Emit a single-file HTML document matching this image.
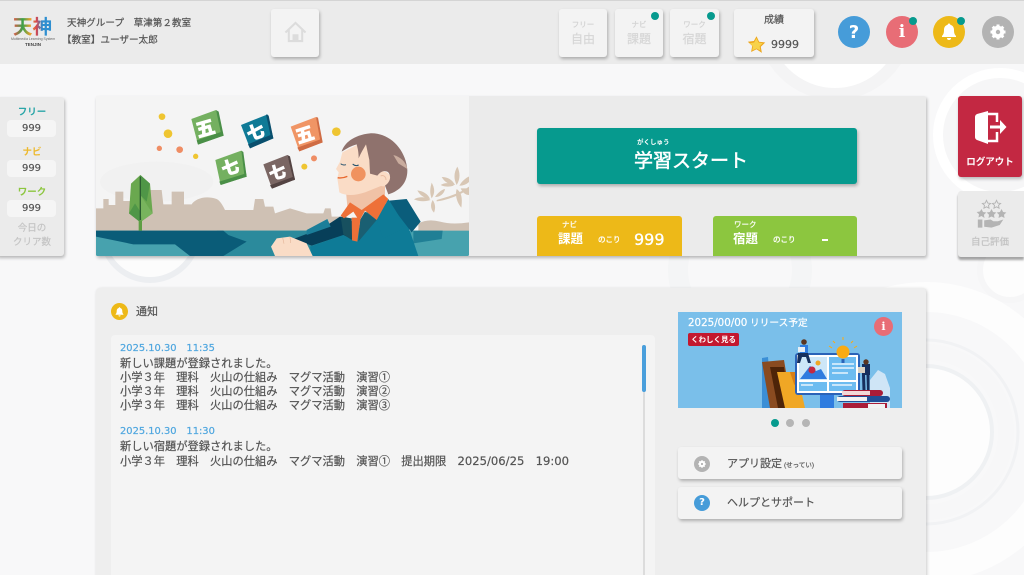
<!DOCTYPE html>
<html lang="ja"><head><meta charset="utf-8"><title>天神</title>
<style>
*{box-sizing:border-box;margin:0;padding:0}
html,body{width:1024px;height:575px;overflow:hidden}
body{position:relative;background:#f8f8f9;font-family:"Liberation Sans","Noto Sans CJK JP",sans-serif;color:#555;}
#w{position:absolute;left:0;top:0;width:1024px;height:575px;overflow:hidden;filter:blur(.35px)}
.a{position:absolute}
.t{position:absolute;white-space:nowrap;line-height:1;-webkit-text-stroke:.2px}
.c{text-align:center}
.n{font-family:"DejaVu Sans","Noto Sans CJK JP",sans-serif}
.card{position:absolute;background:#f3f3f3;border-radius:3px;box-shadow:1px 2px 3px rgba(0,0,0,.27)}
.dot{position:absolute;width:8px;height:8px;border-radius:50%;background:#069a8e}
.circ{position:absolute;width:32px;height:32px;border-radius:50%;top:16px}
.msg{position:absolute;left:120px;white-space:nowrap;font-size:11.25px;line-height:14px;color:#555;-webkit-text-stroke:.2px}
.date{color:#4ea6df;font-size:9.9px;font-weight:400;font-family:"DejaVu Sans","Noto Sans CJK JP",sans-serif}
.num{position:absolute;left:7px;width:49px;height:17px;border-radius:4px;background:#f5f5f5;font:10px/18px "DejaVu Sans",sans-serif;color:#555;text-align:center;-webkit-text-stroke:.2px}
</style></head><body><div id="w">
<svg class="a" style="left:0;top:0" width="1024" height="575" viewBox="0 0 1024 575" fill="none">
<circle cx="835" cy="22" r="72" fill="#fff" stroke="#f4f4f5" stroke-width="12"/>
<circle cx="150" cy="232" r="48" fill="#fcfcfc" stroke="#eceef1" stroke-width="6"/>
<circle cx="740" cy="270" r="62" fill="none" stroke="#f4f5f6" stroke-width="20"/>
<circle cx="1000" cy="135" r="62" fill="#f6f6f7" stroke="#fff" stroke-width="10"/>
<circle cx="1010" cy="270" r="30" fill="#fdfdfd" stroke="#f6f6f7" stroke-width="6"/>
<circle cx="926" cy="432" r="66" fill="#fdfdfd" stroke="#eff1f3" stroke-width="4"/>
<circle cx="926" cy="432" r="80" fill="none" stroke="#f7f7f8" stroke-width="16"/>
<circle cx="926" cy="432" r="92" fill="none" stroke="#f1f2f4" stroke-width="3"/>
<circle cx="926" cy="432" r="135" fill="none" stroke="#fdfdfd" stroke-width="30"/>
</svg>

<!-- header -->
<div class="a" style="left:0;top:0;width:1024px;height:64px;background:#ebebeb;border-top:1px solid #d4d4d4"></div>
<svg class="a" style="left:13px;top:16px" width="42" height="22" viewBox="0 0 42 22">
<defs><linearGradient id="lg"><stop offset="0" stop-color="#e8574a"/><stop offset=".25" stop-color="#3aa34a"/><stop offset=".45" stop-color="#f0a02c"/><stop offset=".6" stop-color="#d8454f"/><stop offset=".75" stop-color="#2f8fd0"/><stop offset="1" stop-color="#2f8fd0"/></linearGradient></defs>
<text x="0" y="17.500" font-size="19.500" font-weight="700" fill="url(#lg)" font-family="'Noto Sans CJK JP',sans-serif">天神</text></svg>
<div class="t c" style="left:11px;top:38px;width:44px;font-size:3.500px;color:#666;-webkit-text-stroke:0">Multimedia Learning System</div>
<div class="t c" style="left:13px;top:43px;width:40px;font-size:4.500px;font-weight:700;color:#444;-webkit-text-stroke:0">TENJIN</div>
<div class="t" style="left:67px;top:19px;font-size:9.600px;color:#555">天神グループ　草津第２教室</div>
<div class="t" style="left:62px;top:36px;font-size:9.600px;color:#555">【教室】ユーザー太郎</div>

<div class="card" style="left:271px;top:9px;width:48px;height:48px"></div>
<svg class="a" style="left:284px;top:21px" width="23" height="22" viewBox="0 0 24 23" fill="none" stroke="#dcdcdc" stroke-width="2.200"><path d="M1.500 12 12 2l10.500 10M5 9.500V21h14V9.500"/><path d="M10 21v-6h4v6" fill="#dcdcdc"/></svg>

<div class="card" style="left:559px;top:9px;width:48px;height:48px"></div>
<div class="t c" style="left:559px;top:21px;width:48px;font-size:7.500px;color:#d2d2d2">フリー</div>
<div class="t c" style="left:559px;top:33px;width:48px;font-size:12px;color:#d6d6d6">自由</div>
<div class="card" style="left:615px;top:9px;width:48px;height:48px"></div>
<div class="t c" style="left:615px;top:21px;width:48px;font-size:7.500px;color:#d2d2d2">ナビ</div>
<div class="t c" style="left:615px;top:33px;width:48px;font-size:12px;color:#d6d6d6">課題</div>
<div class="dot" style="left:651px;top:12px"></div>
<div class="card" style="left:670px;top:9px;width:49px;height:48px"></div>
<div class="t c" style="left:670px;top:21px;width:49px;font-size:7.500px;color:#d2d2d2">ワーク</div>
<div class="t c" style="left:670px;top:33px;width:49px;font-size:12px;color:#d6d6d6">宿題</div>
<div class="dot" style="left:707px;top:12px"></div>
<div class="card" style="left:734px;top:9px;width:80px;height:48px"></div>
<div class="t c" style="left:734px;top:15.500px;width:80px;font-size:10px;color:#555">成績</div>
<svg class="a" style="left:747px;top:35px" width="19" height="19" viewBox="0 0 24 24"><path d="M12 1.500l3.300 7 7.700 1-5.600 5.300 1.400 7.700L12 18l-6.800 3.500 1.400-7.700L1 8.500l7.700-1z" fill="#eda51c"/><path d="M12 4l2.500 5.500 5.500.8-4 4 1 5.500L12 17 6.500 19.500l1-5.200-4-4 5.500-.8z" fill="#f8d24a"/></svg>
<div class="t n" style="left:771px;top:39px;font-size:11px;color:#555">9999</div>

<div class="circ n" style="left:838px;background:#469cd9;color:#fff;text-align:center;font-size:18px;font-weight:700;line-height:33px">?</div>
<div class="circ" style="left:886px;background:#e86d76;color:#fff;text-align:center;font:700 17px/33px 'DejaVu Serif','Liberation Serif',serif">i</div>
<div class="dot" style="left:909px;top:17px"></div>
<div class="circ" style="left:933px;background:#edb918"></div>
<svg class="a" style="left:941px;top:23px" width="16" height="18" viewBox="0 0 16 18" fill="#fff"><path d="M8 .5c-.8 0-1.300.6-1.300 1.300C4.200 2.500 3 4.500 3 7c0 3-.6 4.500-2 6v1h14v-1c-1.400-1.500-2-3-2-6 0-2.500-1.200-4.500-3.700-5.200C9.300 1.100 8.800.5 8 .5z"/><path d="M6 15h4a2 2 0 0 1-4 0z"/></svg>
<div class="dot" style="left:957px;top:17px"></div>
<div class="circ" style="left:982px;background:#b3b3b3"></div>
<svg class="a" style="left:990px;top:24px" width="16" height="16" viewBox="0 0 16 16"><circle cx="8" cy="8" r="4.200" fill="none" stroke="#fff" stroke-width="4"/><g stroke="#fff" stroke-width="3"><path d="M8 .5v3M8 12.500v3M.5 8h3M12.500 8h3M2.700 2.700l2.100 2.100M11.200 11.200l2.100 2.100M2.700 13.300l2.100-2.100M11.200 4.800l2.100-2.100"/></g></svg>

<!-- left stats -->
<div class="card" style="left:-4px;top:97px;width:68px;height:159px;background:#ebebeb"></div>
<div class="t c" style="left:0;top:107.500px;width:64px;font-size:9.500px;font-weight:700;color:#2aa6a8;-webkit-text-stroke:0">フリー</div>
<div class="num" style="top:120px">999</div>
<div class="t c" style="left:0;top:147.500px;width:64px;font-size:9.500px;font-weight:700;color:#edb92e;-webkit-text-stroke:0">ナビ</div>
<div class="num" style="top:160px">999</div>
<div class="t c" style="left:0;top:187.500px;width:64px;font-size:9.500px;font-weight:700;color:#8cc63f;-webkit-text-stroke:0">ワーク</div>
<div class="num" style="top:200px">999</div>
<div class="a c" style="left:0;top:221.500px;width:64px;font-size:9.500px;line-height:14px;color:#c4c4c4;-webkit-text-stroke:.2px">今日の<br>クリア数</div>

<!-- hero -->
<div class="card" style="left:96px;top:96px;width:830px;height:160px;background:#ebebeb;border-radius:2px"></div>
<div class="a" style="left:96px;top:96px;width:373px;height:160px;background:#f4f4f4"></div>
<svg class="a" style="left:90px;top:95px" width="385" height="165" viewBox="0 0 1155 495">
<clipPath id="hc"><rect x="18" y="3" width="1119" height="480" rx="4"/></clipPath>
<g clip-path="url(#hc)">
<ellipse cx="200" cy="260" rx="170" ry="60" fill="#f1f1f1"/>
<path d="M18 340H40V312H56V330H76V290H100V318H122V300L180 285H215L220 328H245V290H282V328H305C315 312 345 300 380 312C392 318 400 335 405 345H490L495 312H520L525 335H550L555 355L600 340L650 355H700L705 340H722L725 365H770V410H18z" fill="#cfc1b4"/>
<path d="M985 385Q1015 370 1050 380T1137 382V410H985z" fill="#cfc1b4"/>
<rect x="18" y="407" width="1119" height="80" fill="#47a2ae"/>
<path d="M380 407H760V483H400z" fill="#2b8a9c"/>
<path d="M18 407H400L415 420L470 440L400 483H300L255 448H130L18 425z" fill="#0a5c78"/>
<path d="M970 407H1058L1055 432L970 445z" fill="#207f95"/>
<g fill="#d8c7b5"><path d="M1025 310c-8-20-3-35 0-47 8 14 12 30 0 47zM1020 312c-20-3-32-14-38-26 16 2 32 10 38 26zM1022 315c-18 6-36 4-50-2 14-8 34-9 50 2zM1028 315c10 14 8 28 4 38-10-10-12-24-4-38zM1035 306c12-18 26-24 30-24-2 12-12 24-30 24zM1040 315c30-8 70-20 97-40v6c-26 20-70 36-97 38zM1100 270c-10-20-8-38 2-55 8 16 10 36-2 55zM1108 272c8-14 20-24 30-28v16c-8 8-18 12-30 12zM1095 270c-18 0-32-10-40-24 18 0 32 8 40 24zM1092 272c-14 4-28 4-40-2 12-8 28-8 40 2zM1100 282c14 10 18 24 14 56-12-14-20-36-14-56zM1112 280h25v20c-10 0-20-8-25-20z"/></g>
<!-- tree -->
<rect x="146" y="370" width="10" height="37" fill="#5f9e44"/>
<path d="M151 240L180 266L188 355L156 378H146L117 355L123 266z" fill="#6aa84f"/>
<path d="M151 240L180 266L170 320L151 300zM117 355L135 325L151 350V378H146z" fill="#4f9647"/>
<path d="M151 300L188 355L156 378L151 350z" fill="#78b45d"/>
<path d="M149 245h4v130h-4z" fill="#2b5c30"/>
<!-- dots -->
<circle cx="216" cy="65" r="10" fill="#efc531"/><circle cx="234" cy="116" r="13" fill="#efc531"/><circle cx="208" cy="160" r="8" fill="#ef8d64"/><circle cx="269" cy="164" r="10" fill="#ef8d64"/><circle cx="317" cy="184" r="8" fill="#efc531"/><circle cx="739" cy="110" r="13" fill="#efc531"/><circle cx="672" cy="190" r="9" fill="#ef8d64"/><circle cx="643" cy="215" r="9" fill="#efc531"/>
<!-- blocks -->
<g font-family="'Noto Sans CJK JP',sans-serif" font-weight="900" fill="#fff" stroke="#fff" stroke-width="2" text-anchor="middle">
<g stroke="none"><path d="M304 72L378 45L400 122L324 149z" fill="#74b060"/><path d="M378 45L386 50L401 122L395 124z" fill="#4a8f47"/><path d="M324 149L401 122L396 110L320 136z" fill="#4a8f47"/></g><text x="346" y="120" font-size="56" transform="rotate(-16 346 100)">五</text>
<g stroke="none"><path d="M453 90L533 58L550 130L480 160z" fill="#0f7a96"/><path d="M528 58L536 62L550 130L544 132z" fill="#0a4f6d"/><path d="M480 160L550 130L546 118L474 148z" fill="#0a4f6d"/></g><text x="496" y="130" font-size="52" transform="rotate(-20 496 110)">七</text>
<g stroke="none"><path d="M602 95L678 66L698 142L628 169z" fill="#f09565"/><path d="M678 66L684 68L698 142L692 144z" fill="#cf6c44"/><path d="M628 169L698 142L694 132L622 158z" fill="#cf6c44"/></g><text x="644" y="138" font-size="54" transform="rotate(-18 644 117)">五</text>
<g stroke="none"><path d="M376 195L454 167L470 245L392 270z" fill="#74b060"/><path d="M454 167L460 171L470 245L464 247z" fill="#4a8f47"/><path d="M392 270L470 245L468 235L388 260z" fill="#4a8f47"/></g><text x="420" y="236" font-size="52" transform="rotate(-16 420 215)">七</text>
<g stroke="none"><path d="M520 208L592 180L614 254L546 281z" fill="#7a6663"/><path d="M592 180L600 184L615 254L611 256z" fill="#534342"/><path d="M546 281L615 254L613 244L540 271z" fill="#534342"/></g><text x="562" y="250" font-size="50" transform="rotate(-16 562 232)">七</text>
</g>
<!-- boy: jacket -->
<path d="M830 350L880 320L950 380L985 483H665L660 455L760 420L790 435z" fill="#0e7b97"/>
<path d="M610 432L700 398L750 365L790 380L790 435L760 420L665 452z" fill="#073f59"/>
<path d="M650 405L712 372L722 395L650 420z" fill="#1b7e99"/>
<path d="M752 365L785 370L785 435L760 418z" fill="#17505f"/>
<path d="M810 375L825 350L860 375L805 440z" fill="#1a5f72"/>
<path d="M885 318L950 312L992 380L965 412L925 360z" fill="#0a5d7b"/>
<path d="M860 375L895 312L925 360L940 400L880 430z" fill="#0e7b97"/>
<!-- neck/face -->
<path d="M768 290L772 335L820 350L885 305V240H770z" fill="#f0c2a6"/>
<path d="M757 172L750 200L738 222L746 232L742 250L745 270L748 292C770 305 800 300 825 292L880 270V170L820 140z" fill="#fadcc6"/>
<circle cx="880" cy="252" r="22" fill="#fadcc6"/>
<path d="M872 243c8-4 16 2 16 12" stroke="#e9bba0" stroke-width="3" fill="none"/>
<!-- hair -->
<path d="M755 170C762 145 790 120 840 115C900 112 948 165 952 225C953 262 930 288 895 298L885 272C900 262 905 245 895 232C885 225 872 228 862 242L840 236L838 195L828 148C815 170 810 180 806 190C806 170 803 160 800 148C785 152 770 160 755 170z" fill="#8f726d"/>
<path d="M910 180C930 185 948 200 952 222L925 205z" fill="#c9ac9e"/>
<circle cx="805" cy="237" r="22" fill="#f0925f"/>
<path d="M752 206c4 4 10 5 16 3M788 207c5 5 12 6 18 3" stroke="#24516c" stroke-width="3" fill="none"/>
<path d="M743 248c10 2 20 0 29-4" stroke="#e9682e" stroke-width="4" fill="none"/>
<!-- collar & tie -->
<path d="M785 368L812 368L802 440L786 436z" fill="#ee7038"/>
<path d="M752 362L780 322L815 345L880 298L895 312L860 375L825 347L808 378L790 350L762 370z" fill="#ee7038"/>
<!-- hand -->
<path d="M543 455L560 430L600 425L650 445L668 483H555z" fill="#fadcc6"/>
<path d="M578 428l4 18M600 426l2 18" stroke="#e5b79b" stroke-width="2"/>
</g></svg>

<div class="card" style="left:537px;top:128px;width:320px;height:56px;background:#069a8e"></div>
<div class="t" style="left:637px;top:140px;font-size:6.500px;color:#fff;font-weight:700;-webkit-text-stroke:0">がくしゅう</div>
<div class="t" style="left:634px;top:152px;font-size:19px;color:#fff;-webkit-text-stroke:.5px">学習スタート</div>
<div class="a" style="left:537px;top:216px;width:145px;height:40px;background:#edb918;border-radius:3px 3px 0 0"></div>
<div class="t" style="left:562px;top:221px;font-size:7.500px;color:#fff">ナビ</div>
<div class="t" style="left:558px;top:233px;font-size:12.500px;font-weight:700;color:#fff;-webkit-text-stroke:0">課題</div>
<div class="t" style="left:598px;top:236px;font-size:7.500px;color:#fff;-webkit-text-stroke:.3px">のこり</div>
<div class="t n" style="left:634px;top:232px;font-size:16px;color:#fff;-webkit-text-stroke:.3px">999</div>
<div class="a" style="left:713px;top:216px;width:144px;height:40px;background:#8cc63f;border-radius:3px 3px 0 0"></div>
<div class="t" style="left:734px;top:221px;font-size:7.500px;color:#fff">ワーク</div>
<div class="t" style="left:733px;top:233px;font-size:12.500px;font-weight:700;color:#fff;-webkit-text-stroke:0">宿題</div>
<div class="t" style="left:773px;top:236px;font-size:7.500px;color:#fff;-webkit-text-stroke:.3px">のこり</div>
<div class="a" style="left:822px;top:239px;width:6px;height:2px;background:#fff"></div>

<!-- right side -->
<div class="a" style="left:958px;top:96px;width:64px;height:81px;background:#c32842;border-radius:3px;box-shadow:1px 2px 3px rgba(0,0,0,.25)"></div>
<svg class="a" style="left:958px;top:96px" width="64" height="60" viewBox="958 96 64 60"><path d="M975 117Q975 115 977 114L988 111V144L977 140Q975 139 975 137z" fill="#fff"/><path d="M988 114H997V122M997 132V141H988" fill="none" stroke="#fff" stroke-width="2.500"/><path d="M990 125.500H1000V120L1006.500 127L1000 134V128.500H990z" fill="#fff"/></svg>
<div class="t c" style="left:958px;top:157.500px;width:64px;font-size:9.500px;font-weight:700;color:#fff;-webkit-text-stroke:0">ログアウト</div>
<div class="a" style="left:958px;top:191px;width:66px;height:66px;background:#ebebeb;border-radius:3px 0 0 3px;box-shadow:0 3px 2px rgba(0,0,0,.35)"></div>
<svg class="a" style="left:976px;top:198px" width="31" height="32" viewBox="0 0 34 32" fill="#b4b4b4"><path d="M11.500 1l1.400 3 3.100.4-2.300 2.100.6 3.100-2.800-1.500-2.800 1.500.6-3.100L7 4.400l3.100-.4zM22.500 1l1.400 3 3.100.4-2.300 2.100.6 3.100-2.800-1.500-2.800 1.500.6-3.100L18 4.400l3.100-.4z" fill="none" stroke="#b4b4b4"/><path d="M6 10.500l1.700 3.300 3.600.5-2.600 2.500.6 3.600L6 18.200l-3.300 1.700.6-3.600L.7 13.800l3.600-.5zM17 10.500l1.700 3.300 3.600.5-2.600 2.500.6 3.600-3.300-1.700-3.300 1.700.6-3.600-2.600-2.500 3.600-.5zM28 10.500l1.700 3.300 3.600.5-2.600 2.500.6 3.600-3.300-1.700-3.300 1.700.6-3.600-2.600-2.500 3.600-.5z"/><path d="M2 22h5v9H2zM9 23l7-1 3 2h5l6-2-4 6-9 3-8-1z"/></svg>
<div class="t c" style="left:958px;top:237.500px;width:64px;font-size:9.500px;color:#c2c2c2">自己評価</div>

<!-- notice -->
<div class="a" style="left:96px;top:288px;width:830px;height:300px;background:#eeeeee;border-radius:4px;box-shadow:1px 1px 3px rgba(0,0,0,.2)"></div>
<div class="a" style="left:111px;top:303px;width:17px;height:17px;border-radius:50%;background:#edb918"></div>
<svg class="a" style="left:115px;top:307px" width="9" height="10" viewBox="0 0 16 18" fill="#fff"><path d="M8 .5c-.8 0-1.300.6-1.300 1.300C4.200 2.500 3 4.500 3 7c0 3-.6 4.500-2 6v1h14v-1c-1.400-1.500-2-3-2-6 0-2.500-1.200-4.500-3.700-5.200C9.300 1.100 8.800.5 8 .5z"/><path d="M6 15h4a2 2 0 0 1-4 0z"/></svg>
<div class="t" style="left:136px;top:306.500px;font-size:11px;color:#555">通知</div>
<div class="a" style="left:111px;top:335px;width:544px;height:250px;background:#f4f4f4;border-radius:4px"></div>
<div class="a" style="left:643px;top:345px;width:2px;height:230px;background:#dcdcdc"></div>
<div class="a" style="left:642px;top:345px;width:4px;height:47px;background:#4a9fdc;border-radius:2px"></div>
<div class="msg date" style="top:342px">2025.10.30　11:35</div>
<div class="msg" style="top:357px">新しい課題が登録されました。<br>小学３年　理科　火山の仕組み　マグマ活動　演習①<br>小学３年　理科　火山の仕組み　マグマ活動　演習②<br>小学３年　理科　火山の仕組み　マグマ活動　演習③</div>
<div class="msg date" style="top:425px">2025.10.30　11:30</div>
<div class="msg" style="top:440px">新しい宿題が登録されました。<br>小学３年　理科　火山の仕組み　マグマ活動　演習①　提出期限　<span class="n" style="font-size:11.600px">2025/06/25</span>　<span class="n" style="font-size:11.600px">19:00</span></div>

<!-- banner -->
<svg class="a" style="left:678px;top:312px" width="224" height="96" viewBox="0 0 224 96">
<rect width="224" height="96" fill="#7abfea"/>
<path d="M192 96V68l8-10 7 4 5 14v20z" fill="#cfe5f6"/>
<path d="M84 96V46l6-1 4 51z" fill="#3b8fd6"/>
<path d="M84 50L106 48L114 96H92z" fill="#8a4b20"/><path d="M92 55H106L112 96H100z" fill="#4e2408"/>
<path d="M99 60H119L127 96H107z" fill="#f0a725"/><path d="M112 60H119L124 82L116 72z" fill="#d87f17"/>
<rect x="117" y="41" width="65" height="42" rx="3" fill="#2a63b8"/><rect x="119" y="43" width="61" height="38" fill="#fff"/>
<rect x="121" y="45" width="28" height="23" fill="#cde7f8"/><rect x="151" y="45" width="27" height="23" fill="#6dbcf0"/><rect x="121" y="70" width="28" height="9" fill="#6dbcf0"/><rect x="151" y="70" width="27" height="9" fill="#6dbcf0"/>
<path d="M122 67l10-13 6 5 5-2 6 10z" fill="#2f7cdf"/><circle cx="134" cy="58" r="3.500" fill="#c32842"/><circle cx="140" cy="51" r="2.500" fill="#f0a725"/>
<path d="M154 52h22M154 56h22M154 61h16M123 73h12M154 73h20" stroke="#fff" stroke-width="1.200"/>
<path d="M142 83h14v13h-14z" fill="#2f7cdf"/>
<circle cx="165" cy="40" r="6.500" fill="#f9ab14"/><path d="M165 47v4" stroke="#2a63b8" stroke-width="3"/><path d="M154 36l-3-2M157 31l-2-2M165 28v-3M173 31l2-2M176 36l3-2" stroke="#f9ab14"/>
<path d="M122 33h8v10h-8z" fill="#2f7cdf"/><circle cx="126" cy="30" r="2.800" fill="#5a3520"/><path d="M120 41h10l3 10h-3l-2-6h-4l-2 6h-3z" fill="#16305e"/><rect x="120" y="35" width="7" height="5" fill="#e7eef5"/>
<rect x="184" y="52" width="8" height="11" fill="#16305e"/><circle cx="188" cy="50" r="2.700" fill="#5a3520"/><rect x="180" y="55" width="7" height="6" fill="#dbd2c2"/><path d="M184 63h3l.5 15h-3zM188.500 63h3v15h-2.500z" fill="#16305e"/>
<rect x="164" y="78" width="41" height="6" rx="3" fill="#a91c38"/><rect x="164" y="79" width="28" height="4" fill="#f2d8d8"/>
<rect x="159" y="84" width="53" height="6" rx="3" fill="#1f4f97"/><rect x="159" y="85" width="30" height="4" fill="#f2f2f2"/>
<rect x="165" y="91" width="44" height="5" fill="#a91c38"/><rect x="190" y="92" width="17" height="4" fill="#f2f2f2"/>
</svg>
<div class="t" style="left:688px;top:318px;font-size:9.700px;color:#fff"><span class="n" style="font-size:10.300px">2025/00/00</span> リリース予定</div>
<div class="a c" style="left:688px;top:333px;width:51px;height:13px;background:#c3182f;border-radius:2px;font-size:7.500px;line-height:13px;font-weight:700;color:#fff">くわしく見る</div>
<div class="a c" style="left:874px;top:317px;width:19px;height:19px;border-radius:50%;background:#e86d76;color:#fff;font:700 11px/20px 'DejaVu Serif','Liberation Serif',serif">i</div>
<div class="a" style="left:771px;top:419px;width:8px;height:8px;border-radius:50%;background:#069a8e"></div>
<div class="a" style="left:786px;top:419px;width:8px;height:8px;border-radius:50%;background:#b5b5b5"></div>
<div class="a" style="left:802px;top:419px;width:8px;height:8px;border-radius:50%;background:#b5b5b5"></div>

<div class="card" style="left:678px;top:447px;width:224px;height:32px"></div>
<div class="a" style="left:694px;top:456px;width:16px;height:16px;border-radius:50%;background:#b3b3b3"></div>
<svg class="a" style="left:698px;top:460px" width="8" height="8" viewBox="0 0 16 16"><circle cx="8" cy="8" r="4.200" fill="none" stroke="#fff" stroke-width="4"/><g stroke="#fff" stroke-width="3"><path d="M8 .5v3M8 12.500v3M.5 8h3M12.500 8h3M2.700 2.700l2.100 2.100M11.200 11.200l2.100 2.100M2.700 13.300l2.100-2.100M11.200 4.800l2.100-2.100"/></g></svg>
<div class="t" style="left:727px;top:458.500px;font-size:11px;color:#555">アプリ設定<span style="font-size:6.500px;margin-left:2px">(せってい)</span></div>
<div class="card" style="left:678px;top:487px;width:224px;height:32px"></div>
<div class="a c n" style="left:694px;top:495px;width:16px;height:16px;border-radius:50%;background:#469cd9;color:#fff;font-size:10px;font-weight:700;line-height:16px">?</div>
<div class="t" style="left:727px;top:498px;font-size:11px;color:#555">ヘルプとサポート</div>
</div></body></html>
